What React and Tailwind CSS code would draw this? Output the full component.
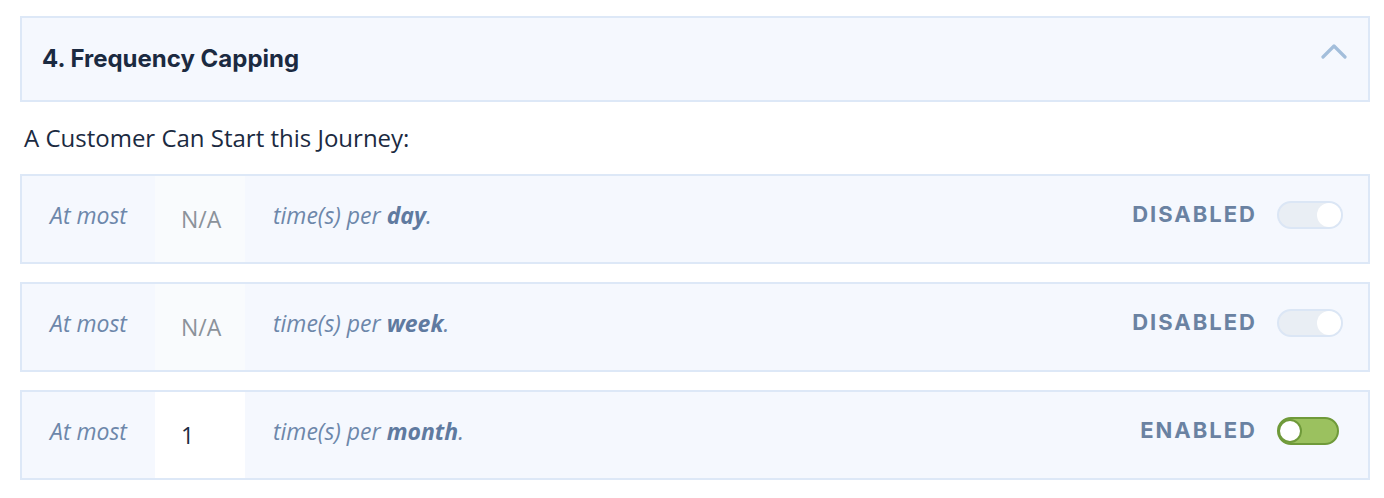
const rows = [
  { unit: "day", value: "N/A", enabled: false },
  { unit: "week", value: "N/A", enabled: false },
  { unit: "month", value: "1", enabled: true },
];

function Toggle({ on }) {
  if (on) {
    return (
      <div className="flex items-center w-[62px] h-[28px] rounded-full border-2 border-[#6f9a3a] bg-[#9bc15f]">
        <div className="w-[24px] h-[24px] rounded-full bg-white border-2 border-[#6f9a3a] -ml-px" />
      </div>
    );
  }
  return (
    <div className="flex items-center justify-end w-[66px] h-[28px] rounded-full border-2 border-[#dbe6f5] bg-[#e9eef4]">
      <div className="w-[24px] h-[24px] rounded-full bg-white" />
    </div>
  );
}

export default function App() {
  return (
    <div className="bg-white min-h-[498px] pt-[16px] pl-[20px] pr-[14px] font-['Open_Sans',sans-serif]">
      <div className="flex items-center justify-between h-[86px] border-2 border-[#dde8f7] bg-[#f5f8fe] pl-[20px] pr-[21px]">
        <h2 className="font-['Inter',sans-serif] font-bold text-[24px] text-[#1b2a41]">4. Frequency Capping</h2>
        <svg width="26" height="16" viewBox="0 0 26 16" fill="none" className="mb-[16px]">
          <path d="M2 14 L13 3 L24 14" stroke="#a3bedb" strokeWidth="3.2" strokeLinecap="round" strokeLinejoin="round" />
        </svg>
      </div>

      <p className="pl-[4px] h-[72px] flex items-center text-[24px] text-[#1b2a41]">A Customer Can Start this Journey:</p>

      <div className="flex flex-col gap-[18px]">
        {rows.map((r) => (
          <div key={r.unit} className="flex items-stretch h-[90px] border-2 border-[#dde8f7] bg-[#f5f8fe]">
            <span className="flex items-center pl-[28px] pr-[28px] pb-[8px] italic text-[23px] text-[#6d87aa]">At most</span>
            <div className={`flex items-center w-[90px] pl-[26px] text-[23px] ${r.enabled ? "bg-white text-[#1b2a41]" : "bg-[#f9fbfd] text-[#8b929a]"}`}>
              {r.value}
            </div>
            <span className="flex items-center pl-[28px] pb-[8px] italic text-[23px] text-[#6d87aa]">
              time(s) per&nbsp;<b className="font-bold text-[#5f7aa0]">{r.unit}</b>.
            </span>
            <div className={`ml-auto flex items-center gap-[20px] pb-[9px] ${r.enabled ? "pr-[29px]" : "pr-[25px]"}`}>
              <span className="font-['Inter',sans-serif] font-bold text-[22px] tracking-[2px] text-[#6a82a2]">
                {r.enabled ? "ENABLED" : "DISABLED"}
              </span>
              <Toggle on={r.enabled} />
            </div>
          </div>
        ))}
      </div>
    </div>
  );
}
